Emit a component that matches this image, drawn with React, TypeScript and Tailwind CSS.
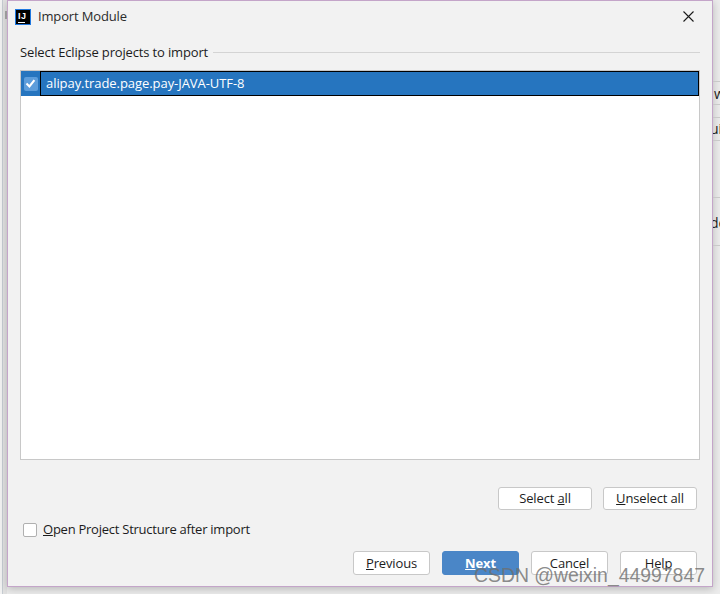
const font = { fontFamily: '"Open Sans", "Noto Sans", sans-serif' };

function Btn({ children, w, primary, pt }: { children: React.ReactNode; w: string; primary?: boolean; pt?: boolean }) {
  return (
    <div
      className={
        w +
        " rounded-[3px] border flex items-center justify-center text-[13px] tracking-[-0.15px] " +
        (pt ? "h-[24px] pt-[1px] " : "h-[23px] ") +
        (primary ? "bg-[#4a86c7] border-[#4a86c7] text-white font-bold" : "bg-white border-[#c8c8c8] text-[#1c1c1c]")
      }
    >
      <span>{children}</span>
    </div>
  );
}

export default function App() {
  return (
    <div className="relative w-[720px] h-[594px] overflow-hidden bg-[#ececec] flex" style={font}>
      <div className="w-[2px] bg-[#f2f2f2] shrink-0" />
      <div className="w-[1px] bg-[#c6ccd2] shrink-0" />
      <div className="w-[4px] bg-[#e2e2e2] shrink-0" />
      <div className="absolute left-[5px] top-[11px] w-[2px] h-[8px] bg-[#9a9a9a]" />
      <div className="w-[706px] h-[587px] shrink-0 bg-[#f2f2f2] border border-[#c4a5c9] flex flex-col shadow-[0_2px_8px_rgba(0,0,0,0.22)]">
        <div className="h-[31px] flex items-center pl-[7px] pr-[18px] shrink-0">
          <div className="w-[16px] h-[16px] bg-black border border-[#1f78e0] relative overflow-hidden">
            <span className="absolute left-[2px] top-[1px] text-white text-[9px] font-bold leading-[10px] tracking-[0.6px]" style={{ fontFamily: '"Liberation Sans", sans-serif' }}>IJ</span>
            <div className="absolute left-[2px] bottom-[1px] w-[7px] h-[1px] bg-white" />
          </div>
          <span className="ml-[7px] text-[13px] tracking-[-0.15px] text-[#2b2b2b]">Import Module</span>
          <svg className="ml-auto" width="11" height="11" viewBox="0 0 11 11" fill="none" stroke="#1a1a1a" strokeWidth="1.1">
            <path d="M0.5 0.5L10.5 10.5M10.5 0.5L0.5 10.5" />
          </svg>
        </div>
        <div className="flex-1 flex flex-col pl-[12px] pr-[12px]">
          <div className="flex items-center h-[22px] mt-[10px]">
            <span className="text-[13px] tracking-[-0.15px] text-[#1c1c1c]">Select Eclipse projects to import</span>
            <div className="flex-1 h-[1px] bg-[#d4d4d4] ml-[5px] mb-[2px]" />
          </div>
          <div className="mt-[6px] h-[390px] bg-white border border-[#c8c8c8]">
            <div className="flex h-[25px]">
              <div className="w-[19px] bg-[#2675bf] flex items-center justify-center shrink-0">
                <div className="w-[14px] h-[14px] rounded-[2px] bg-[#5d9ddb] flex items-center justify-center">
                  <svg width="11" height="11" viewBox="0 0 11 11" fill="none" stroke="#fff" strokeWidth="2.1"><path d="M1.5 5.6L4.4 8.4L9.4 2.2" /></svg>
                </div>
              </div>
              <div className="flex-1 bg-[#2675bf] border border-black flex items-center pl-[5px] text-[13px] tracking-[-0.06px] text-white">alipay.trade.page.pay-JAVA-UTF-8</div>
            </div>
          </div>
          <div className="flex justify-end gap-[11px] mt-[27px] pr-[3px]">
            <Btn w="w-[94px]">Select <u>a</u>ll</Btn>
            <Btn w="w-[94px]"><u>U</u>nselect all</Btn>
          </div>
          <div className="flex items-center mt-[8px] h-[24px] pl-[3px]">
            <div className="w-[14px] h-[14px] rounded-[2px] bg-white border border-[#b0b0b0]" />
            <span className="ml-[6px] text-[13px] tracking-[-0.25px] text-[#1c1c1c]"><u>O</u>pen Project Structure after import</span>
          </div>
          <div className="flex justify-end gap-[12px] mt-[9px] pr-[3px]">
            <Btn w="w-[77px]" pt><u>P</u>revious</Btn>
            <Btn w="w-[77px]" pt primary><u>N</u>ext</Btn>
            <Btn w="w-[77px]" pt>Cancel</Btn>
            <Btn w="w-[77px]" pt>Help</Btn>
          </div>
        </div>
      </div>
      <div className="flex-1 flex flex-col pt-[81px] min-w-0 overflow-hidden text-[14px] text-[#222]">
        <div className="h-[23px] border-t border-[#c9c9c9] leading-[23px] pl-[1px]">w</div>
        <div className="h-[13px] border-t border-[#c9c9c9]" />
        <div className="h-[23px] border-t border-[#c9c9c9] leading-[21px] -ml-[0px] whitespace-nowrap"><span className="ml-[-3px]">ui</span></div>
        <div className="h-[57px] border-t border-[#c9c9c9]" />
        <div className="h-[48px] border-t border-[#c9c9c9] leading-[50px] whitespace-nowrap"><span className="ml-[-3px]">de</span></div>
        <div className="border-t border-[#c9c9c9]" />
      </div>
      <div className="absolute left-[474px] top-[563px] text-[19.4px] leading-[24px] text-[#6e6e6e]/80" style={{ fontFamily: '"Liberation Sans", sans-serif' }}>CSDN @weixin_44997847</div>
    </div>
  );
}
